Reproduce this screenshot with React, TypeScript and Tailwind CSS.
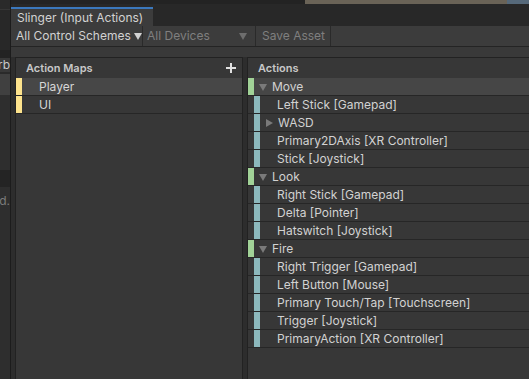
import React from 'react';

type ActionRow = { kind: 'action' | 'binding' | 'composite'; label: string; selected?: boolean };

const actions: ActionRow[] = [
  { kind: 'action', label: 'Move', selected: true },
  { kind: 'binding', label: 'Left Stick [Gamepad]' },
  { kind: 'composite', label: 'WASD' },
  { kind: 'binding', label: 'Primary2DAxis [XR Controller]' },
  { kind: 'binding', label: 'Stick [Joystick]' },
  { kind: 'action', label: 'Look' },
  { kind: 'binding', label: 'Right Stick [Gamepad]' },
  { kind: 'binding', label: 'Delta [Pointer]' },
  { kind: 'binding', label: 'Hatswitch [Joystick]' },
  { kind: 'action', label: 'Fire' },
  { kind: 'binding', label: 'Right Trigger [Gamepad]' },
  { kind: 'binding', label: 'Left Button [Mouse]' },
  { kind: 'binding', label: 'Primary Touch/Tap [Touchscreen]' },
  { kind: 'binding', label: 'Trigger [Joystick]' },
  { kind: 'binding', label: 'PrimaryAction [XR Controller]' },
];

const DownArrow = ({ color = '#7a7a7a' }: { color?: string }) => (
  <svg width="8" height="7" viewBox="0 0 8 7" className="shrink-0">
    <polygon points="0,0 8,0 4,7" fill={color} />
  </svg>
);

const RightArrow = () => (
  <svg width="7" height="8" viewBox="0 0 7 8" className="shrink-0">
    <polygon points="0,0 7,4 0,8" fill="#7a7a7a" />
  </svg>
);

const ActionLine: React.FC<{ row: ActionRow }> = ({ row }) => {
  if (row.kind === 'action') {
    return (
      <div className={`h-[18px] flex items-center border-b border-[#262626] ${row.selected ? 'bg-[#464646]' : ''}`}>
        <div className="w-[6px] h-full bg-[#a1d297] shrink-0" />
        <div className="ml-[5px] mt-[1px]">
          <DownArrow />
        </div>
        <span className="ml-[5px] text-[12px] text-[#d2d2d2]">{row.label}</span>
      </div>
    );
  }
  return (
    <div className="h-[18px] flex items-center border-b border-[#262626]">
      <div className="w-[6px] h-full shrink-0" />
      <div className="w-[6px] h-full bg-[#8cb8bc] shrink-0" />
      {row.kind === 'composite' ? (
        <>
          <div className="ml-[6px]">
            <RightArrow />
          </div>
          <span className="ml-[5px] text-[12px] text-[#d2d2d2] whitespace-nowrap">{row.label}</span>
        </>
      ) : (
        <span className="ml-[17px] text-[12px] text-[#d2d2d2] whitespace-nowrap">{row.label}</span>
      )}
    </div>
  );
};

export default function App() {
  return (
    <div className="w-[529px] h-[379px] flex bg-[#282828] overflow-hidden font-['Inter','Noto_Sans',sans-serif] leading-none select-none">
      {/* editor stuff behind the window */}
      <div className="w-[11px] shrink-0 flex flex-col border-r border-[#1c1c1c] overflow-hidden">
        <div className="h-[10px] bg-[#2a2a2a] border-b border-[#363636]" />
        <div className="h-[40px] bg-[#282828]" />
        <div className="h-[8px] bg-[#232323]" />
        <div className="h-[14px] bg-[#383838] flex items-center justify-end">
          <span className="text-[12px] text-[#c8c8c8] whitespace-nowrap">rb</span>
        </div>
        <div className="h-[2px] bg-[#2a2a2a]" />
        <div className="h-[21px] bg-[#404040]" />
        <div className="h-[75px] bg-[#2e2e2e]" />
        <div className="h-[17px] bg-[#242424]" />
        <div className="flex-1 bg-[#2e2e2e] pt-[8px] flex justify-end">
          <span className="text-[12px] text-[#7c7c7c] whitespace-nowrap">d.</span>
        </div>
      </div>

      <div className="flex-1 flex flex-col min-w-0">
        {/* strip of whatever sits above the window */}
        <div className="h-[4px] flex shrink-0">
          <div className="w-[294px] bg-[#232323]" />
          <div className="flex-1 bg-[#6a6357]" />
          <div className="w-[22px] bg-[#56697a]" />
        </div>

        {/* tab bar */}
        <div className="h-[22px] bg-[#282828] flex items-end shrink-0">
          <div className="h-[19px] w-[142px] bg-[#3c3c3c] border-t-2 border-[#3b78bd] flex items-center pl-[6px]">
            <span className="text-[12px] text-[#d2d2d2] whitespace-nowrap">Slinger (Input Actions)</span>
          </div>
        </div>

        {/* toolbar */}
        <div className="h-[21px] bg-[#3c3c3c] border-b border-[#242424] flex items-stretch shrink-0 text-[12px]">
          <div className="w-[132px] flex items-center pl-[5px] text-[#d2d2d2] border-r border-[#2a2a2a]">
            <span className="whitespace-nowrap">All Control Schemes</span>
            <div className="ml-[3px]">
              <DownArrow color="#d2d2d2" />
            </div>
          </div>
          <div className="w-[113px] flex items-center justify-between pl-[4px] pr-[8px] text-[#7f7f7f] border-r border-[#2a2a2a]">
            <span className="whitespace-nowrap">All Devices</span>
            <DownArrow color="#6e6e6e" />
          </div>
          <div className="w-[75px] flex items-center pl-[6px] text-[#7f7f7f] border-r border-[#2a2a2a]">
            <span className="whitespace-nowrap">Save Asset</span>
          </div>
        </div>

        <div className="h-[10px] bg-[#393939] shrink-0" />

        {/* panes */}
        <div className="flex-1 flex gap-[4px] pl-[4px] bg-[#2d2d2d] min-h-0">
          <div className="w-[228px] shrink-0 bg-[#373737] border border-b-0 border-[#222222] flex flex-col">
            <div className="h-[20px] flex items-center justify-between pl-[10px] pr-[6px] shrink-0">
              <span className="text-[11px] font-semibold text-[#c8c8c8]">Action Maps</span>
              <svg width="10" height="10" viewBox="0 0 10 10">
                <rect x="4" y="0" width="2" height="10" fill="#e0e0e0" />
                <rect x="0" y="4" width="10" height="2" fill="#e0e0e0" />
              </svg>
            </div>
            {['Player', 'UI'].map((name, i) => (
              <div
                key={name}
                className={`h-[18px] flex items-center border-b border-[#262626] ${i === 0 ? 'bg-[#474747]' : ''}`}
              >
                <div className="w-[6px] h-full bg-[#fde38c] shrink-0" />
                <span className="ml-[17px] text-[12px] text-[#d6d6d6]">{name}</span>
              </div>
            ))}
          </div>

          <div className="flex-1 min-w-0 bg-[#373737] border border-r-0 border-b-0 border-[#222222] flex flex-col overflow-hidden">
            <div className="h-[20px] flex items-center pl-[10px] shrink-0">
              <span className="text-[11px] font-semibold text-[#c8c8c8]">Actions</span>
            </div>
            {actions.map((row, i) => (
              <ActionLine key={i} row={row} />
            ))}
          </div>
        </div>
      </div>
    </div>
  );
}
